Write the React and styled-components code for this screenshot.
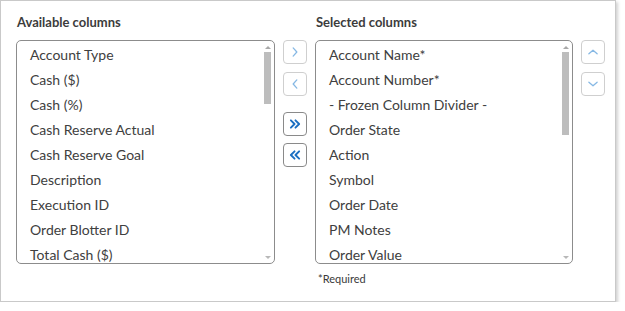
import styled, { createGlobalStyle } from 'styled-components';

const GlobalStyle = createGlobalStyle`
  html, body {
    margin: 0;
    padding: 0;
    background: #ffffff;
  }
  body {
    font-family: Lato, "Open Sans", sans-serif;
    color: #333333;
  }
`;

const available = [
  'Account Type',
  'Cash ($)',
  'Cash (%)',
  'Cash Reserve Actual',
  'Cash Reserve Goal',
  'Description',
  'Execution ID',
  'Order Blotter ID',
  'Total Cash ($)',
];

const selected = [
  'Account Name*',
  'Account Number*',
  '- Frozen Column Divider -',
  'Order State',
  'Action',
  'Symbol',
  'Order Date',
  'PM Notes',
  'Order Value',
];

function Chevron({ dir }) {
  const paths = {
    right: 'M10 7.5 L14 12 L10 16.5',
    left: 'M14 7.5 L10 12 L14 16.5',
    up: 'M7.5 14 L12 10 L16.5 14',
    down: 'M7.5 10 L12 14 L16.5 10',
    rightAll: 'M7.5 8 L11.5 12 L7.5 16 M12.5 8 L16.5 12 L12.5 16',
    leftAll: 'M11.5 8 L7.5 12 L11.5 16 M16.5 8 L12.5 12 L16.5 16',
  };
  const bold = dir === 'rightAll' || dir === 'leftAll';
  return (
    <svg width="22" height="22" viewBox="0 0 24 24" fill="none">
      <path
        d={paths[dir]}
        stroke="currentColor"
        strokeWidth={bold ? 2.1 : 1.4}
        strokeLinecap="round"
        strokeLinejoin="round"
      />
    </svg>
  );
}

function ListBox({ items, thumb }) {
  return (
    <List>
      <Items>
        {items.map((item) => (
          <Item key={item}>{item}</Item>
        ))}
      </Items>
      <Scrollbar>
        <ArrowUp />
        <Thumb $height={thumb} />
        <Spacer />
        <ArrowDown />
      </Scrollbar>
    </List>
  );
}

export default function App() {
  return (
    <>
      <GlobalStyle />
      <Card>
        <Grid>
          <Label>Available columns</Label>
          <div />
          <Label>Selected columns</Label>
          <div />

          <ListBox items={available} thumb={52} />
          <ButtonStack>
            <IconButton $active={false}>
              <Chevron dir="right" />
            </IconButton>
            <IconButton $active={false} $gap={8}>
              <Chevron dir="left" />
            </IconButton>
            <IconButton $active $gap={16}>
              <Chevron dir="rightAll" />
            </IconButton>
            <IconButton $active $gap={7}>
              <Chevron dir="leftAll" />
            </IconButton>
          </ButtonStack>
          <ListBox items={selected} thumb={83} />
          <ButtonStack>
            <IconButton $active={false}>
              <Chevron dir="up" />
            </IconButton>
            <IconButton $active={false} $gap={8}>
              <Chevron dir="down" />
            </IconButton>
          </ButtonStack>

          <div />
          <div />
          <Note>*Required</Note>
          <div />
        </Grid>
      </Card>
    </>
  );
}

const Card = styled.div`
  width: 616px;
  height: 302px;
  border: 1px solid #c9c9c9;
  box-shadow: 2px 2px 3px rgba(0, 0, 0, 0.18);
  background: #ffffff;
  padding: 13px 0 0 15px;
  box-sizing: border-box;
`;

const Grid = styled.div`
  display: grid;
  grid-template-columns: 259px 24px 258px 24px;
  column-gap: 8px;
`;

const Label = styled.div`
  font-size: 13px;
  line-height: 16px;
  font-weight: 700;
  color: #3c3c3c;
  padding-left: 1px;
  margin-bottom: 10px;
`;

const List = styled.div`
  height: 224px;
  box-sizing: border-box;
  border: 1px solid #8c8c8c;
  border-radius: 5px;
  display: flex;
  overflow: hidden;
`;

const Items = styled.div`
  flex: 1;
  padding-top: 1px;
  overflow: hidden;
`;

const Item = styled.div`
  height: 25px;
  line-height: 25px;
  padding-left: 13px;
  font-size: 14px;
  color: #404040;
  white-space: nowrap;
`;

const Scrollbar = styled.div`
  width: 7px;
  margin-right: 3px;
  padding: 5px 0 4px;
  display: flex;
  flex-direction: column;
  align-items: center;
`;

const ArrowUp = styled.div`
  width: 0;
  height: 0;
  border-left: 3px solid transparent;
  border-right: 3px solid transparent;
  border-bottom: 3px solid #a8a8a8;
  margin-bottom: 3px;
`;

const ArrowDown = styled.div`
  width: 0;
  height: 0;
  border-left: 3px solid transparent;
  border-right: 3px solid transparent;
  border-top: 3px solid #b8b8b8;
`;

const Thumb = styled.div`
  width: 7px;
  height: ${(p) => p.$height}px;
  background-color: #bdbdbd;
  background-image: radial-gradient(#d0d0d0 0.6px, transparent 0.7px);
  background-size: 2px 2px;
`;

const Spacer = styled.div`
  flex: 1;
`;

const ButtonStack = styled.div`
  display: flex;
  flex-direction: column;
`;

const IconButton = styled.button`
  width: 24px;
  height: 24px;
  margin-top: ${(p) => p.$gap || 0}px;
  padding: 0;
  display: flex;
  align-items: center;
  justify-content: center;
  background: #ffffff;
  border: 1px solid ${(p) => (p.$active ? '#8a8a8a' : '#cfcfcf')};
  border-radius: 4px;
  color: ${(p) => (p.$active ? '#1b6fc2' : '#86b8e4')};
  box-sizing: border-box;
`;

const Note = styled.div`
  margin-top: 8px;
  padding-left: 3px;
  font-size: 11px;
  line-height: 14px;
  color: #3a3a3a;
`;
